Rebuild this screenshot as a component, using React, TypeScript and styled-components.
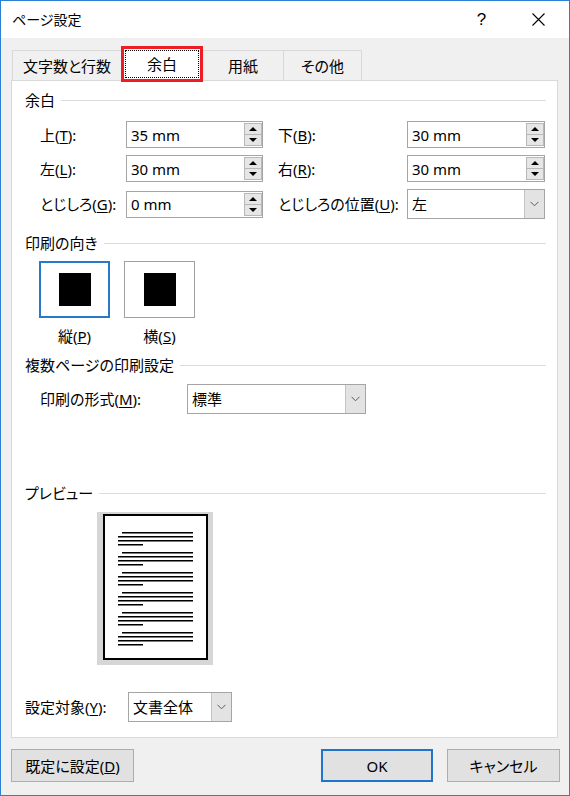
import styled, { createGlobalStyle } from "styled-components";

const GlobalStyle = createGlobalStyle`
  * {
    box-sizing: border-box;
  }
  html,
  body {
    margin: 0;
    padding: 0;
    background: #fff;
  }
  body {
    font-family: "Noto Sans", "Noto Sans CJK JP", sans-serif;
  }
`;

const tabs = [
  { label: "文字数と行数", width: 110 },
  { label: "余白", width: 82, active: true },
  { label: "用紙", width: 82 },
  { label: "その他", width: 79 },
];

const previewGroups = [0, 1, 2, 3, 4, 5];

const Chevron = () => (
  <svg width="9" height="6" viewBox="0 0 9 6">
    <polyline points="0.5,0.8 4.5,4.8 8.5,0.8" fill="none" stroke="#5a5a5a" strokeWidth="1" />
  </svg>
);

const SpinField = ({ value }: { value: string }) => (
  <SpinBox>
    <FieldText>{value}</FieldText>
    <SpinButtons>
      <SpinButton>
        <Arrow $dir="up" />
      </SpinButton>
      <SpinButton>
        <Arrow $dir="down" />
      </SpinButton>
    </SpinButtons>
  </SpinBox>
);

const Combo = ({ value, width }: { value: string; width: number }) => (
  <ComboBox $width={width}>
    <FieldText>{value}</FieldText>
    <ComboArrow>
      <Chevron />
    </ComboArrow>
  </ComboBox>
);

export default function App() {
  return (
    <>
      <GlobalStyle />
      <Dialog>
        <TitleBar>
          <Title>ページ設定</Title>
          <CaptionButton>?</CaptionButton>
          <CaptionButton>
            <svg width="13" height="13" viewBox="0 0 13 13">
              <path d="M0.5 0.5 L12.5 12.5 M12.5 0.5 L0.5 12.5" stroke="#000" strokeWidth="1.1" />
            </svg>
          </CaptionButton>
        </TitleBar>

        <Body>
          <TabStrip>
            {tabs.map((t) =>
              t.active ? (
                <ActiveTab key={t.label} $width={t.width}>
                  <FocusBox>{t.label}</FocusBox>
                </ActiveTab>
              ) : (
                <Tab key={t.label} $width={t.width}>
                  {t.label}
                </Tab>
              )
            )}
          </TabStrip>

          <Panel>
            <SectionHeader>余白</SectionHeader>
            <MarginGrid>
              <FieldLabel>
                上(<u>T</u>):
              </FieldLabel>
              <SpinField value="35 mm" />
              <FieldLabel $indent>
                下(<u>B</u>):
              </FieldLabel>
              <SpinField value="30 mm" />

              <FieldLabel>
                左(<u>L</u>):
              </FieldLabel>
              <SpinField value="30 mm" />
              <FieldLabel $indent>
                右(<u>R</u>):
              </FieldLabel>
              <SpinField value="30 mm" />

              <FieldLabel>
                とじしろ(<u>G</u>):
              </FieldLabel>
              <SpinField value="0 mm" />
              <FieldLabel $indent>
                とじしろの位置(<u>U</u>):
              </FieldLabel>
              <Combo value="左" width={138} />
            </MarginGrid>

            <SectionHeader $mt={14}>印刷の向き</SectionHeader>
            <OrientationRow>
              <OrientationOption>
                <OrientationButton $selected>
                  <OrientationSquare />
                </OrientationButton>
                <OptionLabel>
                  縦(<u>P</u>)
                </OptionLabel>
              </OrientationOption>
              <OrientationOption>
                <OrientationButton>
                  <OrientationSquare />
                </OrientationButton>
                <OptionLabel>
                  横(<u>S</u>)
                </OptionLabel>
              </OrientationOption>
            </OrientationRow>

            <SectionHeader $mt={9}>複数ページの印刷設定</SectionHeader>
            <FormatRow>
              <FieldLabel>
                印刷の形式(<u>M</u>):
              </FieldLabel>
              <Combo value="標準" width={179} />
            </FormatRow>

            <SectionHeader $mt={69}>プレビュー</SectionHeader>
            <PreviewFrame>
              <PreviewPage>
                {previewGroups.map((g) => (
                  <TextBlock key={g}>
                    <TextLine $kind="first" />
                    <TextLine />
                    <TextLine />
                    <TextLine $kind="short" />
                  </TextBlock>
                ))}
              </PreviewPage>
            </PreviewFrame>

            <ApplyRow>
              <FieldLabel>
                設定対象(<u>Y</u>):
              </FieldLabel>
              <Combo value="文書全体" width={104} />
            </ApplyRow>
          </Panel>
        </Body>

        <Footer>
          <PushButton $width={123}>
            既定に設定(<u>D</u>)
          </PushButton>
          <PushButton $width={112} $default>
            OK
          </PushButton>
          <PushButton $width={113}>キャンセル</PushButton>
        </Footer>
      </Dialog>
    </>
  );
}

const Dialog = styled.div`
  width: 570px;
  height: 796px;
  border: 1px solid #2b80d6;
  background: #f0f0f0;
  display: flex;
  flex-direction: column;
  font-size: 15px;
  font-feature-settings: "palt";
  color: #000;
`;

const TitleBar = styled.div`
  height: 37px;
  background: #fff;
  display: flex;
  align-items: center;
  padding: 0 2px 0 11px;
`;

const Title = styled.div`
  flex: 1;
  font-size: 14px;
  line-height: 20px;
`;

const CaptionButton = styled.div`
  width: 57px;
  height: 37px;
  display: flex;
  align-items: center;
  justify-content: center;
  font-size: 17px;
  font-family: "Liberation Sans", sans-serif;
`;

const Body = styled.div`
  flex: 1;
  display: flex;
  flex-direction: column;
  padding: 8px 11px 0 10px;
`;

const TabStrip = styled.div`
  height: 34px;
  display: flex;
  align-items: flex-end;
  padding-left: 1px;
`;

const Tab = styled.div<{ $width: number }>`
  width: ${(p) => p.$width}px;
  height: 30px;
  margin-left: -1px;
  border: 1px solid #d9d9d9;
  border-bottom: none;
  background: #f0f0f0;
  display: flex;
  align-items: center;
  justify-content: center;
  line-height: 20px;
  &:first-child {
    margin-left: 0;
  }
`;

const ActiveTab = styled.div<{ $width: number }>`
  position: relative;
  z-index: 1;
  width: ${(p) => p.$width}px;
  height: 36px;
  margin: 0 0 -2px -1px;
  border: 3px solid #ee1c25;
  background: #fff;
  padding: 1px;
  display: flex;
`;

const FocusBox = styled.div`
  flex: 1;
  border: 1px dotted #000;
  display: flex;
  align-items: center;
  justify-content: center;
  line-height: 20px;
`;

const Panel = styled.div`
  flex: 1;
  background: #fff;
  border: 1px solid #d9d9d9;
  padding: 9px 11px 0 13px;
  display: flex;
  flex-direction: column;
`;

const SectionHeader = styled.div<{ $mt?: number }>`
  display: flex;
  align-items: center;
  gap: 6px;
  height: 20px;
  line-height: 20px;
  margin-top: ${(p) => p.$mt ?? 0}px;
  &::after {
    content: "";
    flex: 1;
    height: 1px;
    margin-top: 1px;
    background: #dcdcdc;
  }
`;

const MarginGrid = styled.div`
  display: grid;
  grid-template-columns: 86px 137px 144px 138px;
  grid-template-rows: 27px 27px 30px;
  row-gap: 7px;
  align-items: center;
  margin: 11px 0 0 15px;
`;

const FieldLabel = styled.div<{ $indent?: boolean }>`
  line-height: 20px;
  white-space: nowrap;
  padding-left: ${(p) => (p.$indent ? 15 : 0)}px;
  & u {
    text-underline-offset: 2px;
  }
`;

const SpinBox = styled.div`
  height: 27px;
  display: flex;
  background: #fff;
  border: 1px solid #a5a5a5;
`;

const FieldText = styled.div`
  flex: 1;
  display: flex;
  align-items: center;
  padding-left: 4px;
  line-height: 20px;
  white-space: nowrap;
`;

const SpinButtons = styled.div`
  width: 18px;
  margin: 1px 0 1px 0;
  display: flex;
  flex-direction: column;
  border: 1px solid #b8b8b8;
`;

const SpinButton = styled.div`
  flex: 1;
  background: #e6e6e6;
  display: flex;
  align-items: center;
  justify-content: center;
  & + & {
    border-top: 1px solid #b8b8b8;
  }
`;

const Arrow = styled.div<{ $dir: "up" | "down" }>`
  width: 0;
  height: 0;
  border-left: 4px solid transparent;
  border-right: 4px solid transparent;
  ${(p) =>
    p.$dir === "up"
      ? "border-bottom: 4px solid #000;"
      : "border-top: 4px solid #000;"}
`;

const ComboBox = styled.div<{ $width: number }>`
  width: ${(p) => p.$width}px;
  height: 30px;
  display: flex;
  background: #fff;
  border: 1px solid #a5a5a5;
`;

const ComboArrow = styled.div`
  width: 20px;
  background: #e3e3e3;
  border-left: 1px solid #c4c4c4;
  display: flex;
  align-items: center;
  justify-content: center;
`;

const OrientationRow = styled.div`
  display: flex;
  gap: 14px;
  margin: 8px 0 0 14px;
`;

const OrientationOption = styled.div`
  display: flex;
  flex-direction: column;
  align-items: center;
`;

const OrientationButton = styled.div<{ $selected?: boolean }>`
  width: 71px;
  height: 57px;
  background: #fff;
  border: 1px solid ${(p) => (p.$selected ? "#2a78c9" : "#a0a0a0")};
  box-shadow: ${(p) => (p.$selected ? "inset 0 0 0 1px #2a78c9" : "none")};
  display: flex;
  align-items: center;
  justify-content: center;
`;

const OrientationSquare = styled.div`
  width: 32px;
  height: 33px;
  background: #000;
`;

const OptionLabel = styled.div`
  margin-top: 8px;
  line-height: 20px;
`;

const FormatRow = styled.div`
  display: grid;
  grid-template-columns: 147px 179px;
  align-items: center;
  margin: 9px 0 0 15px;
`;

const PreviewFrame = styled.div`
  align-self: flex-start;
  width: 116px;
  height: 153px;
  margin: 9px 0 0 72px;
  padding: 2px 5px 5px 6px;
  background: #d6d6d6;
`;

const PreviewPage = styled.div`
  height: 100%;
  background: #fff;
  border: 2px solid #000;
  padding: 16px 0 0 13px;
  display: flex;
  flex-direction: column;
  gap: 6px;
`;

const TextBlock = styled.div`
  display: flex;
  flex-direction: column;
  gap: 2px;
`;

const TextLine = styled.div<{ $kind?: "first" | "short" }>`
  height: 2px;
  background: linear-gradient(#000 50%, #7a7a7a 50%);
  width: ${(p) => (p.$kind === "first" ? 71 : p.$kind === "short" ? 25 : 75)}px;
  margin-left: ${(p) => (p.$kind === "first" ? 4 : 0)}px;
`;

const ApplyRow = styled.div`
  display: grid;
  grid-template-columns: 103px 104px;
  align-items: center;
  margin-top: 27px;
`;

const Footer = styled.div`
  display: flex;
  align-items: center;
  gap: 14px;
  padding: 11px 9px 13px 10px;
`;

const PushButton = styled.div<{ $width: number; $default?: boolean }>`
  width: ${(p) => p.$width}px;
  height: 33px;
  background: #e1e1e1;
  border: ${(p) => (p.$default ? "2px solid #1f74cc" : "1px solid #adadad")};
  display: flex;
  align-items: center;
  justify-content: center;
  line-height: 20px;
  white-space: nowrap;
  &:nth-child(2) {
    margin-left: auto;
  }
`;
